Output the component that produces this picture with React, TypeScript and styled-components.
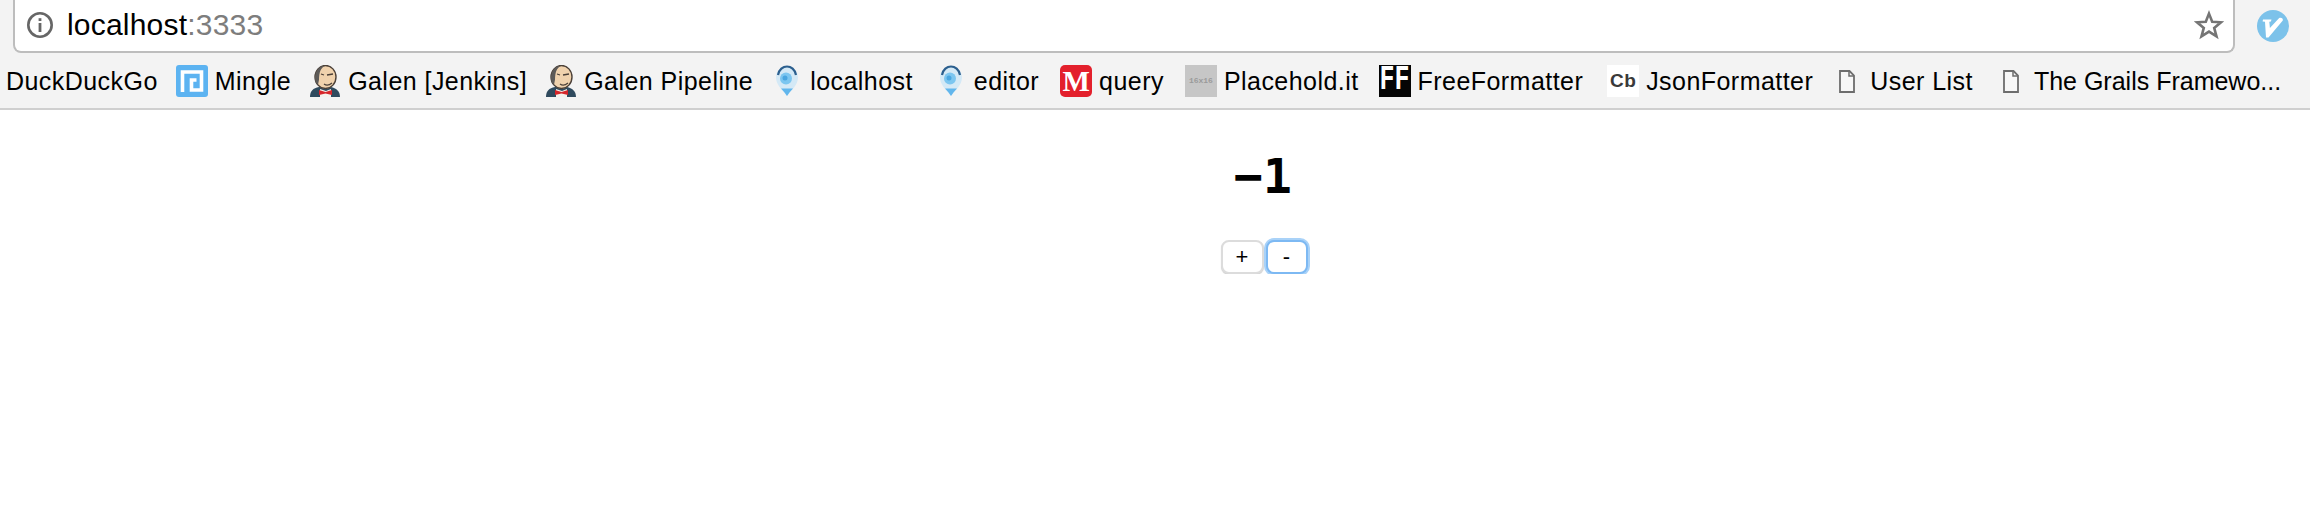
import React from "react";
import styled, { createGlobalStyle } from "styled-components";

const Global = createGlobalStyle`
  html, body { margin: 0; padding: 0; background: #fff; }
  body { font-family: "Liberation Sans", Arial, sans-serif; color: #000; overflow: hidden; }
`;

const Chrome = styled.header`
  height: 110px;
  box-sizing: border-box;
  background: #f3f3f3;
  border-bottom: 2px solid #cfcfcf;
  display: flex;
  flex-direction: column;
`;

const TopRow = styled.div`
  height: 53px;
  display: flex;
  padding-left: 13px;
`;

const Omnibox = styled.div`
  width: 2222px;
  height: 53px;
  box-sizing: border-box;
  background: #fff;
  border: 2px solid #bdbdbd;
  border-top: none;
  border-radius: 0 0 8px 8px;
  display: flex;
  align-items: center;
  padding: 0 9px 1px 11px;
`;

const Url = styled.div`
  margin-left: 13px;
  font-size: 30px;
  letter-spacing: 0.2px;
  flex: 1;
  white-space: nowrap;
`;

const Port = styled.span`
  color: #7d7d7d;
`;

const ExtensionSlot = styled.div`
  width: 75px;
  display: flex;
  align-items: center;
  justify-content: center;
  padding-bottom: 1px;
`;

const Bookmarks = styled.nav`
  height: 55px;
  display: flex;
  align-items: center;
  gap: 18px;
  padding: 1px 0 0 6px;
  overflow: hidden;
  white-space: nowrap;
`;

const Bookmark = styled.div<{ $lead?: number; $track?: number }>`
  display: flex;
  align-items: center;
  gap: 7px;
  margin-left: ${(p) => p.$lead ?? 0}px;
  font-size: 25px;
  letter-spacing: ${(p) => p.$track ?? 0.45}px;
`;

const Fav = styled.span`
  width: 32px;
  height: 32px;
  flex: none;
  display: flex;
  align-items: center;
  justify-content: center;
  overflow: hidden;
`;

const MFav = styled(Fav)`
  background: #e3202c;
  border-radius: 5px;
  color: #fff;
  font: bold 29px/32px "Liberation Serif", serif;
  letter-spacing: 0;
`;

const PlaceholdFav = styled(Fav)`
  background: #c6c6c6;
  color: #9a9a9a;
  font: bold 8px/32px "Liberation Mono", monospace;
  letter-spacing: 0;
`;

const FFFav = styled(Fav)`
  background: #050505;
  color: #fff;
  font: bold 25px/20px "Liberation Mono", monospace;
  letter-spacing: 0;
  overflow: visible;
`;

const FFLetters = styled.span`
  display: block;
  transform: scaleY(1.4);
`;

const CbFav = styled(Fav)`
  background: #fff;
  color: #3a3a3a;
  font: bold 19px/32px "Liberation Sans", sans-serif;
  letter-spacing: 0.5px;
`;

const Main = styled.main`
  padding-left: 218px;
  display: flex;
  flex-direction: column;
  align-items: center;
`;

const Count = styled.h1`
  margin: 40px 0 0 -2px;
  font: bold 48px/52px "DejaVu Sans Mono", monospace;
`;

const Controls = styled.div`
  margin-top: 38px;
  display: flex;
  align-items: center;
  gap: 2px;
`;

const CounterButton = styled.button<{ $focused?: boolean }>`
  width: ${(p) => (p.$focused ? "42px" : "43px")};
  height: 34px;
  padding: 0;
  background: #fff;
  border-radius: 8px;
  font: 22px/1 "Liberation Sans", sans-serif;
  color: #000;
  box-sizing: border-box;
  border: 2px solid ${(p) => (p.$focused ? "#7db9f3" : "#dcdcdc")};
  box-shadow: ${(p) => (p.$focused ? "0 0 0 2px #a9d2f8" : "0 1px 1px #d0d0d0")};
`;

const InfoIcon = () => (
  <svg width="28" height="28" viewBox="0 0 28 28" fill="none">
    <circle cx="14" cy="14" r="11.7" stroke="#666" strokeWidth="2.6" />
    <rect x="12.6" y="7.2" width="2.8" height="2.8" fill="#666" />
    <rect x="12.6" y="12" width="2.8" height="9" fill="#666" />
  </svg>
);

const StarIcon = () => (
  <svg width="30" height="30" viewBox="0 0 30 30" fill="none">
    <path d="M15 3.6l3.2 8.2 8.8.5-6.8 5.6 2.3 8.5L15 21.6l-7.5 4.8 2.3-8.5L3 12.3l8.8-.5z" stroke="#757575" strokeWidth="2.6" strokeLinejoin="miter" />
  </svg>
);

const VLogo = () => (
  <svg width="32" height="32" viewBox="0 0 32 32">
    <circle cx="16" cy="16" r="16" fill="#7cc2ea" />
    <path d="M6 9.5h8.5l-.6 2-1.6.3.6 6.2L22.2 8c2.2-.8 4.2.6 3.6 2.6L11.5 27.6 9 27.6l-1-15.8-2.4-.3z" fill="#fff" />
  </svg>
);

const MingleIcon = () => (
  <svg width="32" height="32" viewBox="0 0 32 32" fill="none">
    <rect width="32" height="32" rx="3" fill="#5cb3f1" />
    <path d="M6.500 27V7h19v18h-10V15h5" stroke="#fff" strokeWidth="3.600" />
  </svg>
);

const JenkinsIcon = () => (
  <svg width="32" height="32" viewBox="0 0 32 32">
    <path d="M1 32c0-6 3-9 9-10h12c5 1 9 4 9 10z" fill="#2f4a5e" />
    <path d="M11 24l6 2 5-2v8H11z" fill="#f4f1ec" />
    <path d="M10 25l6.500 2 6.500-2v5l-6.500-1.500-6.500 1.500z" fill="#d6262a" />
    <ellipse cx="16.500" cy="12" rx="10.500" ry="11.500" fill="#f0d2ad" stroke="#4b4038" strokeWidth="1.400" />
    <path d="M6.500 17C4.500 8 9 1 16 .800c-4 2-6 6-6 14l-1 5z" fill="#5c5a58" />
    <path d="M18 10l6-1M12 9l3 1M15 19c2 1.500 5 1.500 8-1" stroke="#4b4038" strokeWidth="1.300" fill="none" />
  </svg>
);

const PinIcon = () => (
  <svg width="32" height="32" viewBox="0 0 32 32" fill="none">
    <path d="M5 12.500C5 6 10 1.500 16 1.500s11 4.500 11 11c0 7-6 12-11 18.500-5-6.500-11-11.500-11-18.500z" fill="#d4e9f6" />
    <path d="M7 10C8 4.500 12 1.500 16 1.500s8 3 9 8.500" stroke="#2c5f8e" strokeWidth="2.200" />
    <path d="M10 23.500c2.500 2.500 4.500 5 6 7.500 1.500-2.500 3.500-5 6-7.500z" fill="#62b6ec" />
    <circle cx="15" cy="13.500" r="6" fill="#7cc6f0" />
    <circle cx="14" cy="13" r="2.500" fill="#4aa6e0" />
  </svg>
);

const DocIcon = () => (
  <svg width="16" height="23" viewBox="0 0 16 23" fill="none">
    <path d="M1 1h9.500L15 5.500V22H1z" fill="#f7f7f7" stroke="#6d6d6d" strokeWidth="1.800" />
    <path d="M10 1v5h5" stroke="#6d6d6d" strokeWidth="1.500" />
  </svg>
);

const App = () => (
  <>
    <Global />
    <Chrome>
      <TopRow>
        <Omnibox>
          <InfoIcon />
          <Url>
            localhost<Port>:3333</Port>
          </Url>
          <StarIcon />
        </Omnibox>
        <ExtensionSlot>
          <VLogo />
        </ExtensionSlot>
      </TopRow>
      <Bookmarks>
        <Bookmark>DuckDuckGo</Bookmark>
        <Bookmark><Fav><MingleIcon /></Fav>Mingle</Bookmark>
        <Bookmark><Fav><JenkinsIcon /></Fav>Galen [Jenkins]</Bookmark>
        <Bookmark><Fav><JenkinsIcon /></Fav>Galen Pipeline</Bookmark>
        <Bookmark><Fav><PinIcon /></Fav>localhost</Bookmark>
        <Bookmark $lead={4}><Fav><PinIcon /></Fav>editor</Bookmark>
        <Bookmark $lead={3}><MFav>M</MFav>query</Bookmark>
        <Bookmark $lead={3}><PlaceholdFav>16x16</PlaceholdFav>Placehold.it</Bookmark>
        <Bookmark $lead={2}><FFFav><FFLetters>FF</FFLetters></FFFav>FreeFormatter</Bookmark>
        <Bookmark $lead={6}><CbFav>Cb</CbFav>JsonFormatter</Bookmark>
        <Bookmark><Fav><DocIcon /></Fav>User List</Bookmark>
        <Bookmark $lead={4} $track={0}><Fav><DocIcon /></Fav>The Grails Framewo...</Bookmark>
      </Bookmarks>
    </Chrome>
    <Main>
      <Count>−1</Count>
      <Controls>
        <CounterButton>+</CounterButton>
        <CounterButton $focused>-</CounterButton>
      </Controls>
    </Main>
  </>
);

export default App;
